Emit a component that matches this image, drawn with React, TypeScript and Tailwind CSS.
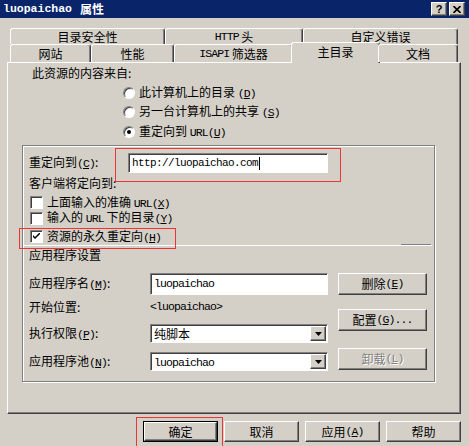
import React from 'react';

const raised =
  'border border-t-white border-l-white border-r-[#404040] border-b-[#404040] shadow-[inset_-1px_-1px_0_#808080] bg-[#d4d0c8]';
const sunken =
  'border border-t-[#808080] border-l-[#808080] border-r-white border-b-white shadow-[inset_1px_1px_0_#404040] bg-white';

function L({ children }: { children: React.ReactNode }) {
  return <span className="font-['Liberation_Mono'] text-[11.5px] tracking-[-0.9px]">{children}</span>;
}

function K({ k }: { k: string }) {
  return (
    <L>
      (<u>{k}</u>)
    </L>
  );
}

function Tab({ className, children }: { className: string; children: React.ReactNode }) {
  return (
    <div
      className={`${className} flex items-center justify-center rounded-t-[3px] border-l border-t border-r border-l-white border-t-white border-r-[#404040] shadow-[inset_-1px_0_0_#808080] bg-[#d4d0c8]`}
    >
      {children}
    </div>
  );
}

function Button({ className, children, disabled }: { className: string; children: React.ReactNode; disabled?: boolean }) {
  return (
    <div
      className={`${className} ${raised} flex items-center justify-center ${
        disabled ? 'text-[#808080] [text-shadow:1px_1px_0_#fff]' : ''
      }`}
    >
      {children}
    </div>
  );
}

function Radio({ checked, children }: { checked?: boolean; children: React.ReactNode }) {
  return (
    <div className="flex h-[16px] items-center gap-[4px]">
      <div className="flex h-[12px] w-[12px] items-center justify-center rounded-full border border-t-[#808080] border-l-[#808080] border-r-white border-b-white bg-white shadow-[inset_1px_1px_0_#404040]">
        {checked && <div className="h-[4px] w-[4px] rounded-full bg-black" />}
      </div>
      <span>{children}</span>
    </div>
  );
}

function Check({ checked, className, children }: { checked?: boolean; className: string; children: React.ReactNode }) {
  return (
    <div className={`${className} flex items-center gap-[4px]`}>
      <div className={`flex h-[13px] w-[13px] items-center justify-center ${sunken}`}>
        {checked && (
          <svg width="7" height="7" viewBox="0 0 7 7">
            <path d="M0 2 L0 4 L2 6 L7 1 L7 -1 L2 4 Z" fill="#000" />
          </svg>
        )}
      </div>
      <span>{children}</span>
    </div>
  );
}

function Select({ children }: { children: React.ReactNode }) {
  return (
    <div className={`flex h-[19px] w-[178px] items-center pl-[3px] ${sunken}`}>
      <span className="flex-1">{children}</span>
      <div className={`my-[1px] mr-[1px] flex h-[15px] w-[16px] items-center justify-center ${raised}`}>
        <svg width="7" height="4" viewBox="0 0 7 4">
          <path d="M0 0 H7 L3.5 4 Z" fill="#000" />
        </svg>
      </div>
    </div>
  );
}

export default function App() {
  return (
    <div className="relative flex h-[446px] w-[469px] flex-col overflow-hidden bg-[#d4d0c8] font-['Noto_Sans_CJK_SC',sans-serif] text-[12px] leading-[16px] text-black">
      {/* title bar */}
      <div className="flex h-[18px] items-center bg-[#0a246a] pl-[3px] text-white">
        <span className="font-['Liberation_Mono'] text-[11.5px] font-bold">luopaichao</span>
        <span className="ml-[8px] font-bold">属性</span>
        <div className="ml-auto mr-[4px] flex gap-[2px] text-black">
          <div className={`flex h-[14px] w-[16px] items-center justify-center text-[11px] font-bold ${raised}`}>
            <span className="font-['Liberation_Sans']">?</span>
          </div>
          <div className={`flex h-[14px] w-[16px] items-center justify-center ${raised}`}>
            <svg width="8" height="7" viewBox="0 0 8 7">
              <path d="M0.5 0 L7.5 7 M7.5 0 L0.5 7" stroke="#000" strokeWidth="1.6" />
            </svg>
          </div>
        </div>
      </div>

      {/* tabs */}
      <div className="mt-[10px] flex h-[16px] pl-[10px]">
        <Tab className="w-[155px]">目录安全性</Tab>
        <Tab className="w-[138px]">
          <L>HTTP</L>&nbsp;头
        </Tab>
        <Tab className="w-[155px]">自定义错误</Tab>
      </div>
      <div className="relative z-10 flex h-[18px] items-end pl-[10px]">
        <Tab className="h-[18px] w-[81px]">网站</Tab>
        <Tab className="h-[18px] w-[83px]">性能</Tab>
        <Tab className="h-[18px] w-[119px]">
          <L>ISAPI</L>&nbsp;筛选器
        </Tab>
        <Tab className="-mx-[2px] mb-[-1px] h-[21px] w-[89px] pb-[3px]">主目录</Tab>
        <Tab className="h-[18px] w-[80px]">文档</Tab>
      </div>

      {/* panel */}
      <div className="ml-[7px] flex h-[352px] w-[454px] flex-col border border-t-white border-l-white border-r-[#404040] border-b-[#404040] shadow-[inset_-1px_-1px_0_#808080]">
        <div className="mt-[2px] h-[16px] pl-[24px]">此资源的内容来自:</div>
        <div className="flex flex-col pl-[115px]">
          <div className="mt-[4px]">
            <Radio>
              此计算机上的目录 <K k="D" />
            </Radio>
          </div>
          <div className="mt-[3px]">
            <Radio>
              另一台计算机上的共享 <K k="S" />
            </Radio>
          </div>
          <div className="mt-[4px]">
            <Radio checked>
              重定向到 <L>URL</L>
              <K k="U" />
            </Radio>
          </div>
        </div>

        {/* group box */}
        <div className="ml-[14px] mt-[5px] flex h-[237px] w-[413px] flex-col border border-[#808080] shadow-[1px_1px_0_#fff,inset_1px_1px_0_#fff]">
          <div className="mt-[7px] flex h-[20px] items-center pl-[6px]">
            <span className="w-[99px]">
              重定向到<K k="C" />:
            </span>
            <div className={`flex h-[20px] w-[200px] items-center pl-[3px] ${sunken}`}>
              <span className="font-['Liberation_Mono'] text-[11px] tracking-[-0.6px]">http://luopaichao.com</span>
              <span className="ml-[1px] h-[13px] w-[1px] bg-black" />
            </div>
          </div>
          <div className="mt-[2px] h-[16px] pl-[6px]">客户端将定向到:</div>
          <Check className="mt-[4px] h-[15px] pl-[7px]">
            上面输入的准确 <L>URL</L>
            <K k="X" />
          </Check>
          <Check className="h-[16px] pl-[7px]">
            输入的 <L>URL</L> 下的目录<K k="Y" />
          </Check>
          <Check checked className="mt-[3px] h-[15px] pl-[7px]">
            资源的永久重定向<K k="H" />
          </Check>
          <div className="flex h-px justify-end pr-[3px]">
            <div className="h-px w-[30px] bg-[#808080]" />
          </div>
          <div className="h-px w-[409px] bg-white" />
          <div className="mt-[1px] h-[16px] pl-[6px]">应用程序设置</div>

          <div className="mt-[10px] flex pl-[6px]">
            <div className="flex flex-col">
              <div className="flex h-[22px] items-center">
                <span className="w-[121px]">
                  应用程序名<K k="M" />:
                </span>
                <div className={`flex h-[22px] w-[178px] items-center pl-[3px] ${sunken}`}>
                  <L>luopaichao</L>
                </div>
              </div>
              <div className="mt-[4px] flex h-[16px] items-center">
                <span className="w-[121px]">开始位置:</span>
                <L>&lt;luopaichao&gt;</L>
              </div>
              <div className="mt-[9px] flex h-[19px] items-center">
                <span className="w-[121px]">
                  执行权限<K k="P" />:
                </span>
                <Select>纯脚本</Select>
              </div>
              <div className="mt-[9px] flex h-[19px] items-center">
                <span className="w-[121px]">
                  应用程序池<K k="N" />:
                </span>
                <Select>
                  <L>luopaichao</L>
                </Select>
              </div>
            </div>
            <div className="ml-[10px] flex flex-col">
              <Button className="h-[22px] w-[89px]">
                删除<K k="E" />
              </Button>
              <Button className="mt-[14px] h-[22px] w-[89px]">
                配置<K k="G" />
                <L>...</L>
              </Button>
              <Button disabled className="mt-[17px] h-[22px] w-[89px]">
                卸载<K k="L" />
              </Button>
            </div>
          </div>
        </div>
      </div>

      {/* dialog buttons */}
      <div className="mt-[7px] flex pl-[143px]">
        <div className="h-[21px] w-[75px] border border-black">
          <Button className="h-full w-full">确定</Button>
        </div>
        <Button className="ml-[6px] h-[21px] w-[75px]">取消</Button>
        <Button className="ml-[6px] h-[21px] w-[75px]">
          应用<K k="A" />
        </Button>
        <Button className="ml-[6px] h-[21px] w-[75px]">帮助</Button>
      </div>

      {/* red annotation boxes */}
      <div className="absolute left-[115px] top-[148px] h-[34px] w-[226px] border border-[#f03434]" />
      <div className="absolute left-[19px] top-[228px] h-[21px] w-[157px] border border-[#f03434]" />
      <div className="absolute left-[136px] top-[417px] h-[40px] w-[87px] border border-[#f03434]" />
    </div>
  );
}
